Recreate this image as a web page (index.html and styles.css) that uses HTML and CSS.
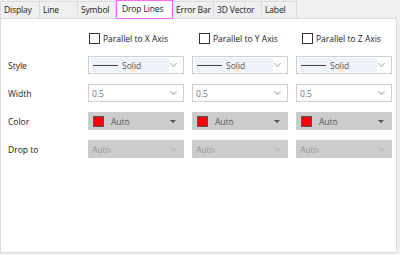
FILE: index.html
```html
<!DOCTYPE html>
<html lang="en">
<head>
  <meta charset="UTF-8" />
  <title>Drop Lines</title>
  <link rel="stylesheet" href="styles.css">
</head>
<body>

<div class="dialog">
  <!-- tabs -->
  <div class="tabs">
    <div class="tab" style="width:40px">Display</div>
    <div class="tab" style="width:38px">Line</div>
    <div class="tab" style="width:38px">Symbol</div>
    <div class="tab active" style="width:57px">Drop Lines</div>
    <div class="tab" style="width:41px">Error Bar</div>
    <div class="tab" style="width:48px">3D Vector</div>
    <div class="tab" style="width:35px">Label</div>
  </div>

  <div class="panel">
    <div class="grid">
      <div></div>
      <label class="check"><span class="box"></span>Parallel to X Axis</label>
      <label class="check"><span class="box"></span>Parallel to Y Axis</label>
      <label class="check"><span class="box"></span>Parallel to Z Axis</label>

      <div class="label">Style</div>
      <div class="combo"><span class="sel"><span class="line"></span>Solid</span><span class="chev"></span></div>
      <div class="combo"><span class="sel"><span class="line"></span>Solid</span><span class="chev"></span></div>
      <div class="combo"><span class="sel"><span class="line"></span>Solid</span><span class="chev"></span></div>

      <div class="label">Width</div>
      <div class="combo"><span class="val">0.5</span><span class="chev"></span></div>
      <div class="combo"><span class="val">0.5</span><span class="chev"></span></div>
      <div class="combo"><span class="val">0.5</span><span class="chev"></span></div>

      <div class="label">Color</div>
      <div class="combo gray"><span class="swatch"></span><span class="val dark">Auto</span><span class="tri"></span></div>
      <div class="combo gray"><span class="swatch"></span><span class="val dark">Auto</span><span class="tri"></span></div>
      <div class="combo gray"><span class="swatch"></span><span class="val dark">Auto</span><span class="tri"></span></div>

      <div class="label">Drop to</div>
      <div class="combo gray"><span class="val dim">Auto</span><span class="chev"></span></div>
      <div class="combo gray"><span class="val dim">Auto</span><span class="chev"></span></div>
      <div class="combo gray"><span class="val dim">Auto</span><span class="chev"></span></div>
    </div>
  </div>
</div>

</body>
</html>
```

FILE: styles.css
```css
body { margin: 0; background: #f0f0f0; font-family: "Open Sans", "Noto Sans", sans-serif; font-size: 8.5px; color: #1a1a1a; }
.dialog { width: 397px; height: 253px; display: flex; flex-direction: column; }

/* tabs */
.tabs { display: flex; height: 18px; align-items: flex-end; }
.tab { box-sizing: border-box; height: 17px; line-height: 15px; padding-left: 3px; letter-spacing: -0.15px; white-space: nowrap; overflow: hidden; border: 1px solid #dcdcdc; border-bottom: none; border-left: none; background: #f0f0f0; }
.tab:first-child { border-left: 1px solid #dcdcdc; }
.tab.active { height: 19px; margin-bottom: -1px; padding-left: 5px; background: #fff; border: 1px solid #ff66ff; line-height: 16px; position: relative; z-index: 1; }

/* panel */
.panel { flex: 1; background: #fff; border: 1px solid #dcdcdc; }
.grid { display: grid; grid-template-columns: 80px 96px 96px 96px; column-gap: 8px; row-gap: 10px; grid-template-rows: 16px repeat(4, 18px); padding-top: 11px; margin-left: -1px; }

.check { display: flex; align-items: center; gap: 3px; white-space: nowrap; }
.box { width: 9px; height: 9px; border: 1px solid #333; background: #fff; }
.grid > .check:nth-child(2) { margin-left: 1px; }
.grid > .check:nth-child(3) { margin-left: 7px; }
.grid > .check:nth-child(4) { margin-left: 6px; }

.label { padding-left: 8px; display: flex; align-items: center; }

.combo { box-sizing: border-box; height: 18px; border: 1px solid #cfcfcf; background: #fff; display: flex; align-items: center; position: relative; }
.combo.gray { background: #cccccc; border-color: #cccccc; }
.sel { display: flex; align-items: center; gap: 4px; background: #eef3fa; height: 14px; margin-left: 2px; width: 76px; padding-left: 2px; color: #555; }
.line { width: 25px; height: 1px; background: #444; }
.val { padding-left: 3px; color: #777; flex: 1; }
.val.dark { color: #555; padding-left: 7px; }
.val.dim { color: #9a9a9a; }
.swatch { width: 9px; height: 9px; background: #ff0000; border: 1px solid #555; margin-left: 4px; }
.chev { position: absolute; right: 7px; top: 4px; width: 4px; height: 4px; border-right: 1px solid #b5b5b5; border-bottom: 1px solid #b5b5b5; transform: rotate(45deg); }
.tri { position: absolute; right: 7px; top: 7px; width: 0; height: 0; border-left: 3.5px solid transparent; border-right: 3.5px solid transparent; border-top: 3.5px solid #555; }
```
